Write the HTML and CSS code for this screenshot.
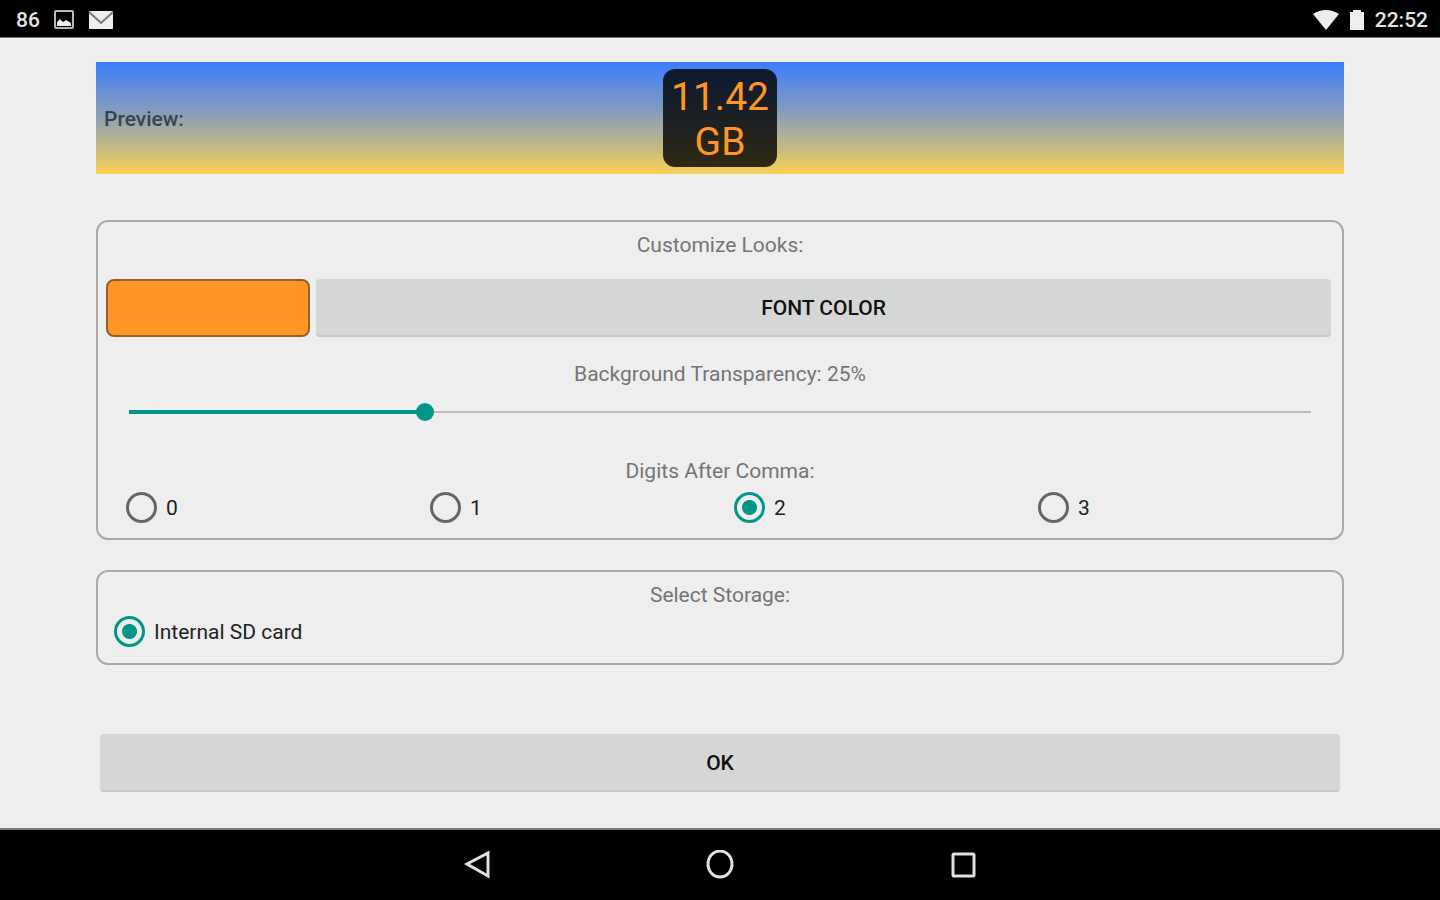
FILE: index.html
```
<!DOCTYPE html>
<html lang="en">
<head>
    <meta charset="UTF-8">
    <meta name="viewport" content="width=device-width, initial-scale=1.0">
    <title>Widget settings</title>
    <link rel="stylesheet" href="styles.css">
</head>
<body>
<header class="status-bar">
    <div class="status-group">
        <span>86</span>
        <svg width="20" height="20" viewBox="0 0 20 20">
            <rect x="1" y="1" width="18" height="17" rx="1" fill="none" stroke="#b8b8b8" stroke-width="2"/>
            <path d="M3 16v-4l3-3 3 3 3-2 5 3v3z" fill="#eee"/>
        </svg>
        <svg width="26" height="20" viewBox="0 0 26 20">
            <rect x="1" y="1" width="24" height="18" rx="1" fill="#eee"/>
            <path d="M1 2l12 11L25 2" fill="none" stroke="#777" stroke-width="2"/>
        </svg>
    </div>
    <div class="status-group right">
        <svg width="26" height="20" viewBox="0 0 26 20">
            <path d="M0 4Q13-4 26 4L13 20z" fill="#eee"/>
        </svg>
        <svg width="16" height="22" viewBox="0 0 16 22">
            <path d="M1 3h3V1h8v2h3v18H1z" fill="#eee"/>
        </svg>
        <span>22:52</span>
    </div>
</header>

<main class="content">
    <section class="preview">
        <span class="preview-label">Preview:</span>
        <div class="widget">11.42<br>GB</div>
    </section>

    <section class="card looks">
        <h2>Customize Looks:</h2>
        <div class="color-row">
            <button type="button" class="swatch" aria-label="Current font color"></button>
            <button type="button" class="button">FONT COLOR</button>
        </div>
        <label class="title" for="transparency">Background Transparency: <span id="percent">25</span>%</label>
        <input type="range" id="transparency" min="0" max="100" value="25">
        <h2 id="digits-title">Digits After Comma:</h2>
        <div class="digits" role="radiogroup" aria-labelledby="digits-title">
            <label class="radio"><input type="radio" name="digits" value="0">0</label>
            <label class="radio"><input type="radio" name="digits" value="1">1</label>
            <label class="radio"><input type="radio" name="digits" value="2" checked>2</label>
            <label class="radio"><input type="radio" name="digits" value="3">3</label>
        </div>
    </section>

    <section class="card storage">
        <h2>Select Storage:</h2>
        <label class="radio"><input type="radio" name="storage" checked>Internal SD card</label>
    </section>

    <button type="button" class="button ok">OK</button>
</main>

<nav class="nav-bar">
    <button type="button" aria-label="Back">
        <svg width="30" height="30" viewBox="0 0 30 30"><path d="M26 3v23L5 14z"/></svg>
    </button>
    <button type="button" aria-label="Home">
        <svg width="30" height="30" viewBox="0 0 30 30"><ellipse cx="15" cy="14" rx="12" ry="13"/></svg>
    </button>
    <button type="button" aria-label="Recent apps">
        <svg width="30" height="30" viewBox="0 0 30 30"><rect x="5" y="4" width="21" height="22" rx="1"/></svg>
    </button>
</nav>

<script>
    const slider = document.getElementById('transparency');

    slider.addEventListener('input', function () {
        slider.style.setProperty('--value', slider.value / 100);
        document.getElementById('percent').textContent = slider.value;
    });
</script>
</body>
</html>
```
FILE: styles.css
```
* {
    box-sizing: border-box;
}
body {
    display: flex;
    flex-direction: column;
    min-height: 100vh;
    margin: 0;
    background-color: #eee;
    color: #222;
    font-family: Roboto, sans-serif;
    font-size: 21px;
    line-height: 26px;
}
button {
    padding: 0;
    border: 0;
    font-family: inherit;
    cursor: pointer;
}
.status-bar {
    display: flex;
    justify-content: space-between;
    align-items: center;
    height: 38px;
    padding: 3px 12px 0 16px;
    background-color: #000;
    border-bottom: 1px solid #777;
    color: #e4e4e4;
    font-weight: 500;
}
.status-group {
    display: flex;
    align-items: center;
    gap: 14px;
}
.status-group.right {
    gap: 10px;
}
.content {
    flex: 1;
    display: flex;
    flex-direction: column;
    padding: 24px 96px;
}
.preview {
    display: grid;
    grid-template-columns: 1fr auto 1fr;
    align-items: center;
    height: 112px;
    padding: 0 8px;
    background: linear-gradient(#3b7cfb, #8ea1b4 50%, #f8d055);
}
.preview-label {
    padding-top: 2px;
    color: #34464c;
    font-weight: 500;
}
.widget {
    padding: 6px 8px 2px;
    border-radius: 12px;
    background-color: rgba(0, 0, 0, 0.8);
    color: #ff9626;
    font-size: 39px;
    line-height: 45px;
    text-align: center;
}
.card {
    border: 2px solid #aaa;
    border-radius: 12px;
}
.card h2, .title {
    display: block;
    margin: 0;
    color: #757575;
    font-size: 21px;
    font-weight: normal;
    text-align: center;
}
.looks {
    margin-top: 46px;
    padding: 10px 0 15px;
}
.color-row {
    display: flex;
    gap: 6px;
    margin: 21px 11px 24px 8px;
}
.swatch {
    width: 204px;
    height: 58px;
    border: 2px solid #94622c;
    border-radius: 8px;
    background-color: #ff9626;
}
.button {
    flex: 1;
    height: 58px;
    padding-top: 2px;
    border-bottom: 2px solid #c6c8c7;
    border-radius: 4px;
    background-color: #d5d7d6;
    color: #111;
    font-size: 21px;
    font-weight: 500;
}
#transparency {
    --value: 0.25;
    appearance: none;
    display: block;
    width: calc(100% - 44px);
    height: 18px;
    margin: 16px 22px 37px;
    background:
        linear-gradient(#009688, #009688) 9px center / calc((100% - 18px) * var(--value)) 4px no-repeat,
        linear-gradient(#bbb, #bbb) center / calc(100% - 18px) 2px no-repeat;
}
#transparency::-webkit-slider-thumb {
    appearance: none;
    width: 18px;
    height: 18px;
    border-radius: 50%;
    background-color: #009688;
}
.digits {
    display: grid;
    grid-template-columns: repeat(4, 1fr);
    margin: 8px 0 0 28px;
}
.radio {
    display: flex;
    align-items: center;
    gap: 9px;
}
.radio input {
    appearance: none;
    width: 31px;
    height: 31px;
    margin: 0;
    border: 3px solid #666;
    border-radius: 50%;
}
.radio input:checked {
    border-color: #009688;
    background: radial-gradient(circle, #009688 7px, transparent 8px);
}
.storage {
    margin-top: 30px;
    padding: 10px 16px 16px;
}
.storage .radio {
    margin-top: 8px;
}
.ok {
    flex: none;
    margin: 69px 4px 0;
}
.nav-bar {
    display: flex;
    justify-content: center;
    align-items: center;
    gap: 213px;
    height: 72px;
    background-color: #000;
    border-top: 2px solid #777;
}
.nav-bar button {
    height: 30px;
    background: none;
}
.nav-bar svg {
    display: block;
    fill: none;
    stroke: #e0e0e0;
    stroke-width: 3;
}
```
